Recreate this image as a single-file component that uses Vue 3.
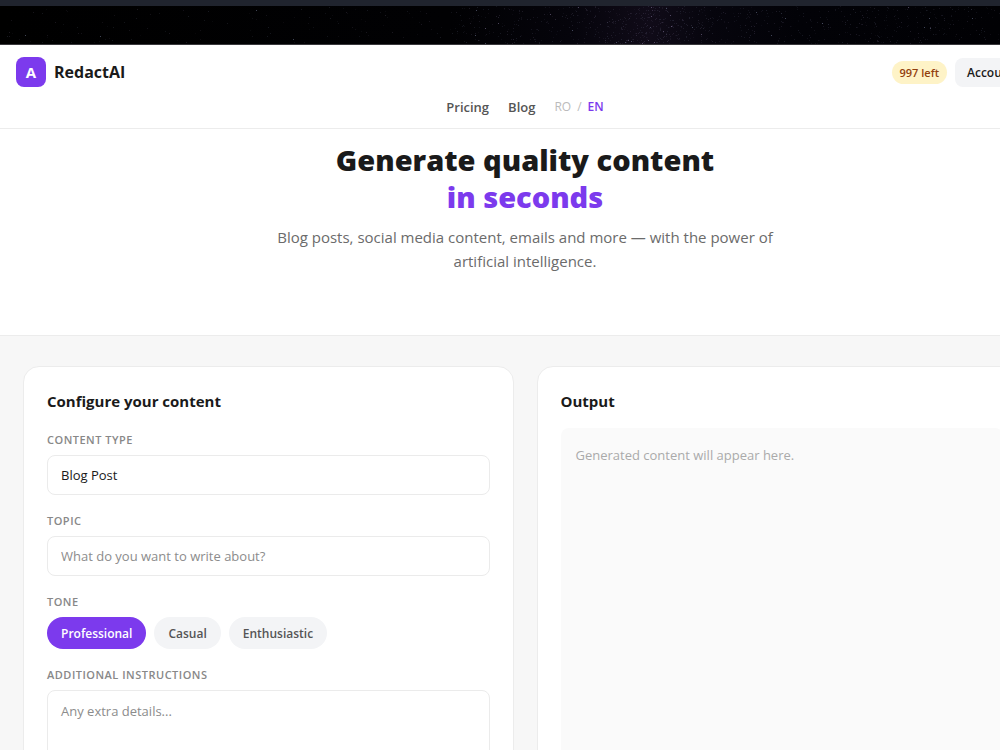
<script setup>
import { ref } from 'vue'

const tones = ['Professional', 'Casual', 'Enthusiastic']
const tone = ref('Professional')
const contentType = ref('Blog Post')
const topic = ref('')
const details = ref('')

let seed = 41
function random() {
  seed = (seed * 16807) % 2147483647
  return seed / 2147483647
}

const stars = []
for (let i = 0; i < 4200; i++) {
  const x = random() * 1000
  const near = Math.exp(-Math.pow((x - 655) / 50, 2))
  const density = x < 450 ? 0.07 : 0.3 + near * 0.7
  if (random() < density) {
    const bright = random() > 0.97
    stars.push({
      x: Math.round(x),
      y: Math.round(random() * 38),
      o: bright ? 0.4 : 0.04 + random() * 0.11,
      c: random() > 0.5 ? '#b9a5d6' : '#9da9d0'
    })
  }
}
</script>

<template>
  <div class="viewport">
    <div class="edge"></div>
    <div class="sky">
      <svg viewBox="0 0 1000 38" preserveAspectRatio="xMidYMid slice" aria-hidden="true">
        <rect v-for="(s, i) in stars" :key="i" :x="s.x" :y="s.y" width="1" height="1" :fill="s.c" :opacity="s.o" />
      </svg>
    </div>
    <div class="page">
      <header>
        <div class="bar">
          <a class="brand" href="#"><span class="mark">A</span><span>RedactAI</span></a>
          <div class="user">
            <span class="left">997 left</span>
            <button class="account" type="button">Account</button>
          </div>
        </div>
        <nav>
          <a href="#">Pricing</a>
          <a href="#">Blog</a>
          <div class="lang"><a href="#">RO</a><span>/</span><a class="on" href="#">EN</a></div>
        </nav>
      </header>
      <section class="hero">
        <h1>Generate quality content<br><span>in seconds</span></h1>
        <p>Blog posts, social media content, emails and more — with the power of artificial intelligence.</p>
      </section>
      <main>
        <form class="card" @submit.prevent>
          <h2>Configure your content</h2>
          <div class="field">
            <label for="type">Content type</label>
            <select id="type" v-model="contentType">
              <option>Blog Post</option>
            </select>
          </div>
          <div class="field">
            <label for="topic">Topic</label>
            <input id="topic" v-model="topic" type="text" placeholder="What do you want to write about?">
          </div>
          <div class="field" role="group" aria-labelledby="tone-label">
            <span id="tone-label" class="label">Tone</span>
            <div class="tones">
              <button v-for="t in tones" :key="t" type="button" :class="{ active: t === tone }" :aria-pressed="t === tone" @click="tone = t">{{ t }}</button>
            </div>
          </div>
          <div class="field">
            <label for="details">Additional instructions</label>
            <textarea id="details" v-model="details" rows="4" placeholder="Any extra details..."></textarea>
          </div>
        </form>
        <section class="card">
          <h2>Output</h2>
          <div class="output">Generated content will appear here.</div>
        </section>
      </main>
    </div>
  </div>
</template>

<style>
body {
  margin: 0;
  background: #f7f7f7;
}
</style>

<style scoped>
* {
  box-sizing: border-box;
}
.viewport {
  height: 100vh;
  overflow: hidden;
  font-family: "Open Sans", "Noto Sans", sans-serif;
  color: #1a1a1a;
}
.edge {
  height: 6px;
  background: #20242e;
}
.sky {
  height: 39px;
  border-bottom: 1px solid #39383c;
  background: linear-gradient(90deg, #000 0%, #010103 45%, #05040b 57%, #100b18 65%, #06050d 71%, #020207 80%, #010104 100%);
}
.sky svg {
  display: block;
  width: 100%;
  height: 100%;
}
.page {
  width: 105%;
  background: #f7f7f7;
}
a {
  color: inherit;
  text-decoration: none;
}
button,
input,
select,
textarea {
  font-family: inherit;
}
header {
  padding: 12px 16px 11px;
  background: #fff;
  border-bottom: 1px solid #ececec;
}
.bar,
.brand,
.user,
nav,
.lang {
  display: flex;
  align-items: center;
}
.bar {
  justify-content: space-between;
}
.brand {
  gap: 8px;
  font-size: 16px;
  font-weight: 700;
}
.mark {
  display: grid;
  place-items: center;
  width: 30px;
  height: 30px;
  border-radius: 8px;
  background: #7c3aed;
  color: #fff;
  font-size: 15px;
}
.user {
  gap: 8px;
}
.left {
  padding: 0 8px;
  border-radius: 12px;
  background: #fef3c7;
  color: #92400e;
  font-size: 11px;
  font-weight: 600;
  line-height: 23px;
}
.account {
  min-width: 79px;
  height: 29px;
  padding: 0 12px;
  border: 0;
  border-radius: 8px;
  background: #f3f4f6;
  color: #1a1a1a;
  font-size: 12px;
  font-weight: 600;
  text-align: left;
}
nav {
  justify-content: center;
  gap: 19px;
  margin-top: 10px;
  color: #555;
  font-size: 13px;
  font-weight: 600;
  line-height: 20px;
}
.lang {
  gap: 6px;
  color: #bbb;
  font-size: 12px;
  font-weight: 400;
}
.lang .on {
  color: #7c3aed;
  font-weight: 600;
}
.hero {
  padding: 12px 24px 62px;
  background: #fff;
  border-bottom: 1px solid #ececec;
  text-align: center;
}
h1 {
  margin: 0;
  font-size: 29px;
  font-weight: 800;
  line-height: 37px;
}
h1 span {
  color: #7c3aed;
}
.hero p {
  max-width: 500px;
  margin: 10px auto 0;
  color: #6b6b6b;
  font-size: 15px;
  line-height: 24px;
}
main {
  display: grid;
  grid-template-columns: 1fr 1fr;
  gap: 23px;
  padding: 30px 23px;
}
.card {
  padding: 23px;
  border: 1px solid #ececec;
  border-radius: 16px;
  background: #fff;
}
h2 {
  margin: 0 0 16px;
  font-size: 15px;
  font-weight: 700;
  line-height: 22px;
}
form h2 {
  margin-bottom: 20px;
}
.field {
  margin-bottom: 18px;
}
label,
.label {
  display: block;
  margin-bottom: 7px;
  color: #888;
  font-size: 11px;
  font-weight: 600;
  line-height: 16px;
  letter-spacing: 0.5px;
  text-transform: uppercase;
}
input,
select,
textarea {
  display: block;
  width: 100%;
  height: 40px;
  padding: 0 13px;
  border: 1px solid #ebebeb;
  border-radius: 8px;
  outline: 0;
  background: #fff;
  color: #1a1a1a;
  font-size: 13px;
  appearance: none;
}
textarea {
  height: 100px;
  padding: 10px 13px;
  line-height: 20px;
  resize: none;
}
::placeholder {
  color: #8c8c8c;
  opacity: 1;
}
.tones {
  display: flex;
  gap: 8px;
}
.tones button {
  height: 32px;
  padding: 0 14px;
  border: 0;
  border-radius: 16px;
  background: #f3f4f6;
  color: #555;
  font-size: 12px;
  font-weight: 600;
}
.tones .active {
  background: #7c3aed;
  color: #fff;
}
.output {
  min-height: 400px;
  padding: 15px;
  border-radius: 8px;
  background: #fafafa;
  color: #aaa;
  font-size: 13px;
  line-height: 24px;
}
</style>
